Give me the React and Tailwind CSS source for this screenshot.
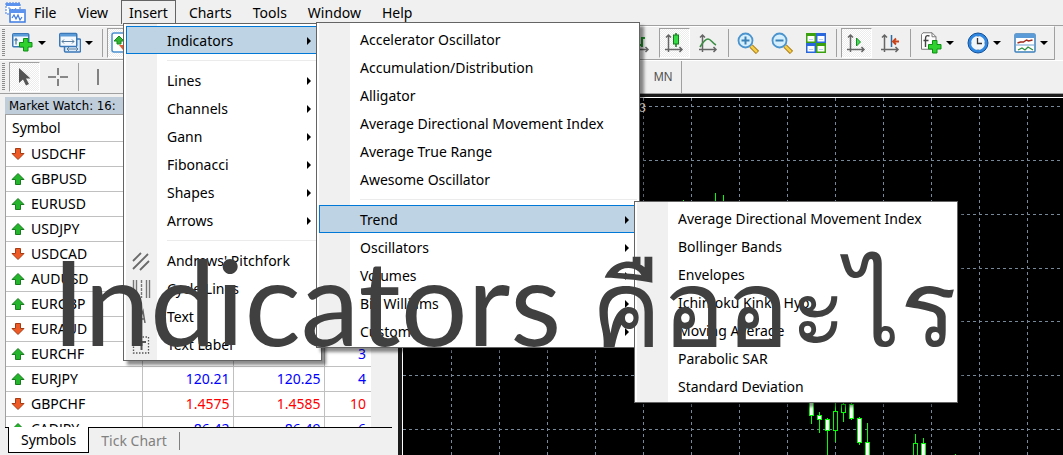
const ICON = { width: 22, height: 22, viewBox: '0 0 22 22', fill: 'none' };

function LogoIcon() {
  return (
    <svg width="21" height="21" viewBox="0 0 21 21" fill="none" aria-hidden="true">
      <rect x="1" y="1" width="14" height="11" fill="#fff" stroke="#3f7be0" strokeDasharray="2 1" />
      <rect x="1" y="1" width="14" height="3" fill="#5b93ee" />
      <path d="M3 6h2v3M7 7l2 2 2-3" stroke="#5b93ee" />
      <rect x="5" y="8" width="15" height="12" fill="#fff" stroke="#3f7be0" strokeWidth="1.5" />
      <rect x="5" y="8" width="15" height="3" fill="#5b93ee" />
      <path d="M7 16l2-3 2 4 2-4 2 5 2-3" stroke="#3f7be0" strokeWidth="1.2" />
    </svg>
  );
}

function Plus({ x, y }) {
  return (
    <path
      transform={`translate(${x} ${y})`}
      d="M4.500 .5h4.500v4h4v4.500h-4v4h-4.500v-4h-4v-4.500h4z"
      fill="#2fd12f"
      stroke="#0c8f12"
    />
  );
}

function NewChartIcon() {
  return (
    <svg {...ICON} aria-hidden="true">
      <rect x=".75" y="1.750" width="16" height="13" rx="1" fill="#f4f9ff" stroke="#3a78b8" strokeWidth="1.500" />
      <rect x="1" y="2" width="15" height="2.500" fill="#5b9bd8" />
      <path d="M4 6.500v6M2.500 8.500L4 6.500l1.500 2M7 12h4" stroke="#47779f" strokeWidth="1.200" />
      <Plus x={7} y={6} />
    </svg>
  );
}

function ProfilesIcon() {
  return (
    <svg {...ICON} aria-hidden="true">
      <rect x="5.500" y="7" width="16" height="13" rx="1" fill="#dcebf9" stroke="#3a78b8" strokeWidth="1.500" />
      <path d="M8 17h11M10 15l-2 2 2 2M17 15l2 2-2 2" stroke="#5b7f9f" />
      <rect x=".75" y="1.500" width="17" height="13" rx="1" fill="#f4f9ff" stroke="#3a78b8" strokeWidth="1.500" />
      <rect x="1" y="2" width="16" height="2.500" fill="#5b9bd8" />
      <path d="M3 9.500h12M5 7.500l-2 2 2 2M13 7.500l2 2-2 2" stroke="#5b7f9f" />
    </svg>
  );
}

function WatchIcon() {
  return (
    <svg {...ICON} aria-hidden="true">
      <rect x="1" y="1" width="20" height="19" rx="2" fill="#fff" stroke="#4a90d0" strokeWidth="1.500" />
      <path d="M8 4l5 5h-3v3H6V9H3z" fill="#33b533" stroke="#168a1c" />
      <path d="M8 13l4 5 4-5z" fill="#f0592a" />
    </svg>
  );
}

function Axes() {
  return (
    <path
      d="M5.500 3v17M3 5.500L5.500 3 8 5.500M2 17.500h17M16.500 15l2.500 2.500-2.500 2.500"
      stroke="#666"
      strokeWidth="1.500"
    />
  );
}

function BarChartIcon() {
  return (
    <svg {...ICON} aria-hidden="true">
      <Axes />
      <path d="M13 5v10M10 13h3M13 6h3" stroke="#1f9a2a" strokeWidth="2" />
    </svg>
  );
}

function CandleIcon() {
  return (
    <svg {...ICON} aria-hidden="true">
      <Axes />
      <path d="M13 1v14" stroke="#157a1c" strokeWidth="1.500" />
      <rect x="10.500" y="3" width="5" height="9" fill="#35dc46" stroke="#157a1c" />
    </svg>
  );
}

function LineChartIcon() {
  return (
    <svg {...ICON} aria-hidden="true">
      <Axes />
      <path d="M3 15C6 10 9 7 11 7c3 0 4 4 8 6" stroke="#3c8f45" strokeWidth="1.600" />
    </svg>
  );
}

function ZoomIcon({ plus }) {
  return (
    <svg {...ICON} aria-hidden="true">
      <path d="M14 14l6.500 6.500" stroke="#a8780f" strokeWidth="4.500" />
      <path d="M14 14l6 6" stroke="#f5cf4a" strokeWidth="2.500" />
      <circle cx="8.500" cy="8.500" r="7" fill="#d6efff" stroke="#4b94cd" strokeWidth="1.800" />
      <path d={plus ? 'M4.500 8.500h8M8.500 4.500v8' : 'M4.500 8.500h8'} stroke="#3a80b5" strokeWidth="2" />
    </svg>
  );
}

function TilesIcon() {
  return (
    <svg {...ICON} aria-hidden="true">
      <rect x="1" y="1" width="10" height="10" fill="#3ba10f" />
      <rect x="11" y="1" width="10" height="10" fill="#2a67dd" />
      <rect x="1" y="11" width="10" height="10" fill="#2a67dd" />
      <rect x="11" y="11" width="10" height="10" fill="#3ba10f" />
      <path d="M2.500 4h7v5.500h-7zM12.500 4h7v5.500h-7zM2.500 14h7v5.500h-7zM12.500 14h7v5.500h-7z" fill="#fff" />
      <path d="M4 7.500h4M14 7.500h4M4 17.500h4M14 17.500h4" stroke="#b8d2ee" />
    </svg>
  );
}

function AutoScrollIcon() {
  return (
    <svg {...ICON} aria-hidden="true">
      <Axes />
      <path d="M11.500 6v8l4-4z" fill="#45dc58" stroke="#1b8a26" />
    </svg>
  );
}

function ShiftIcon() {
  return (
    <svg {...ICON} aria-hidden="true">
      <Axes />
      <path d="M12.500 3v12" stroke="#2c6aa0" strokeWidth="1.500" />
      <path d="M14 9.500h6M17 6.500l-3 3 3 3" stroke="#c9431a" strokeWidth="1.800" />
    </svg>
  );
}

function IndicatorIcon() {
  return (
    <svg {...ICON} aria-hidden="true">
      <path d="M3 .75h9l4 4v12.500H1.500V2.500z" fill="#fdfdfd" stroke="#777" />
      <path d="M12 .75v4h4" stroke="#777" />
      <path d="M9.500 4c-3-1-4 0-4 3v8M3.500 8.500h5" stroke="#444" strokeWidth="1.400" />
      <Plus x={8} y={8} />
    </svg>
  );
}

function ClockIcon() {
  return (
    <svg {...ICON} aria-hidden="true">
      <circle cx="11" cy="11" r="8.500" fill="#f1f6fb" stroke="#2f87e0" strokeWidth="3" />
      <circle cx="11" cy="11" r="10" stroke="#10509c" />
      <path d="M10.500 6v5.500H15" stroke="#333" strokeWidth="1.300" />
      <path d="M11 4v1M11 17v1M4 11h1M17 11h1" stroke="#888" />
    </svg>
  );
}

function TemplateIcon() {
  return (
    <svg {...ICON} aria-hidden="true">
      <rect x="1" y="2" width="20" height="18" rx="1" fill="#fff" stroke="#3e80bd" strokeWidth="1.500" />
      <rect x="1" y="2" width="20" height="4" fill="#5b9bd8" />
      <path d="M1 13h20" stroke="#6ea3d0" />
      <path d="M3.500 11l3-1 3 0 3-2 2 1 4-1" stroke="#a02b1c" strokeWidth="1.500" />
      <path d="M4 18l4-2 3 2 3-3 5 3" stroke="#2f9140" strokeWidth="1.300" />
    </svg>
  );
}

function CursorIcon() {
  return (
    <svg {...ICON} aria-hidden="true">
      <path d="M6 2v15l4-3.500 3 6 3-1.500-3-5.500h4.500z" fill="#555" />
    </svg>
  );
}

function CrosshairIcon() {
  return (
    <svg {...ICON} aria-hidden="true">
      <path d="M11 2v7M11 13v7M1 11h8M13 11h8" stroke="#666" strokeWidth="1.600" />
    </svg>
  );
}

function VLineIcon() {
  return (
    <svg {...ICON} aria-hidden="true">
      <path d="M11 3v16" stroke="#666" strokeWidth="1.600" />
    </svg>
  );
}

function PitchforkIcon() {
  return (
    <svg {...ICON} aria-hidden="true">
      <path d="M2 11l8-8M2 19L17 4M9 20l9-9" stroke="#6a6a6a" strokeWidth="1.800" />
    </svg>
  );
}

function CycleIcon() {
  return (
    <svg {...ICON} aria-hidden="true">
      <path d="M2.500 2v18M5.500 2v18M15.500 2v18M18.500 2v18" stroke="#777" strokeWidth="1.400" />
      <path d="M10.500 2v18" stroke="#777" strokeWidth="1.400" strokeDasharray="3 1" />
    </svg>
  );
}

function TextIcon() {
  return (
    <svg {...ICON} aria-hidden="true">
      <path d="M7 17l5-12 2 12M9 13h5" stroke="#666" strokeWidth="1.500" />
    </svg>
  );
}

function LabelIcon() {
  return (
    <svg {...ICON} aria-hidden="true">
      <rect x="2.500" y="3" width="15" height="16" stroke="#555" strokeWidth="1.300" strokeDasharray="1.500 1.500" />
      <path d="M6 8h9M10.500 8v8" stroke="#555" strokeWidth="2" />
      <rect x="1" y="1" width="4" height="4" fill="#555" />
    </svg>
  );
}

function PriceArrow({ up }) {
  return (
    <svg className="shrink-0" width="14" height="14" viewBox="0 0 14 14" aria-hidden="true">
      {up ? (
        <path d="M7 1.500l6 6h-3.500v5h-5v-5H1z" fill="#25b52c" stroke="#177a1c" />
      ) : (
        <path d="M7 12.500l6-6H9.500v-5h-5v5H1z" fill="#ee5a26" stroke="#a83a12" />
      )}
    </svg>
  );
}

function Grip() {
  return (
    <span className="ml-[2px] h-[28px] w-[3px] shrink-0 bg-[repeating-linear-gradient(#8c8c8c_0_1px,#f0f0f0_1px_2px)]" />
  );
}

function Separator() {
  return (
    <span className="flex h-[28px] w-[6px] shrink-0 justify-center">
      <span className="w-px bg-[#a0a0a0]" />
    </span>
  );
}

function ToolButton({ label, pressed, children }) {
  return (
    <button
      type="button"
      aria-label={label}
      aria-pressed={pressed}
      className="group flex h-[30px] w-[34px] shrink-0 items-center justify-center"
    >
      <span className="flex h-[30px] w-[31px] items-center justify-center border border-transparent group-aria-pressed:border-t-[#a0a0a0] group-aria-pressed:border-r-white group-aria-pressed:border-b-white group-aria-pressed:border-l-[#a0a0a0] group-aria-pressed:bg-[repeating-conic-gradient(#ffffff_0_25%,#ececec_0_50%)] group-aria-pressed:bg-[length:2px_2px]">
        {children}
      </span>
    </button>
  );
}

function DropButton({ label, children }) {
  return (
    <button
      type="button"
      aria-label={label}
      aria-haspopup="menu"
      className="flex h-[30px] w-[47px] shrink-0 items-center gap-1 pl-[7px]"
    >
      {children}
      <svg width="8" height="4" viewBox="0 0 8 4" aria-hidden="true">
        <path d="M0 0h8L4 4z" fill="#000" />
      </svg>
    </button>
  );
}

function Menu({ className, items, label }) {
  return (
    <ul
      role="menu"
      aria-label={label}
      className={`absolute border border-[#646464] bg-[linear-gradient(to_right,#ffffff_2px,#f0f0f0_2px,#f0f0f0_33px,#ffffff_33px)] p-[2px] shadow-[4px_4px_3px_rgba(0,0,0,0.45)] ${className}`}
    >
      {items.map((item, i) =>
        item === null ? (
          <li key={i} role="separator" className="flex h-3 items-center pl-[41px]">
            <span className="h-px w-full bg-[#ebebeb]" />
          </li>
        ) : (
          <li key={item.name} role="none">
            <button
              type="button"
              role="menuitem"
              className={`flex h-7 w-full items-center border pt-[2px] pr-[7px] text-left whitespace-nowrap ${
                item.active ? 'border-[#0078d7] bg-[#bed3e4]' : 'border-transparent'
              }`}
            >
              <span className="flex w-10 shrink-0 pl-[4px]">{item.icon}</span>
              <span className="grow">{item.name}</span>
              {item.sub && (
                <svg width="4" height="8" viewBox="0 0 4 8" aria-hidden="true">
                  <path d="M0 0v8l4-4z" fill="#000" />
                </svg>
              )}
            </button>
          </li>
        ),
      )}
    </ul>
  );
}

const insertMenu = [
  { name: 'Indicators', sub: true, active: true },
  null,
  { name: 'Lines', sub: true },
  { name: 'Channels', sub: true },
  { name: 'Gann', sub: true },
  { name: 'Fibonacci', sub: true },
  { name: 'Shapes', sub: true },
  { name: 'Arrows', sub: true },
  null,
  { name: "Andrews' Pitchfork", icon: <PitchforkIcon /> },
  { name: 'Cycle Lines', icon: <CycleIcon /> },
  { name: 'Text', icon: <TextIcon /> },
  { name: 'Text Label', icon: <LabelIcon /> },
];

const indicatorMenu = [
  { name: 'Accelerator Oscillator' },
  { name: 'Accumulation/Distribution' },
  { name: 'Alligator' },
  { name: 'Average Directional Movement Index' },
  { name: 'Average True Range' },
  { name: 'Awesome Oscillator' },
  null,
  { name: 'Trend', sub: true, active: true },
  { name: 'Oscillators', sub: true },
  { name: 'Volumes', sub: true },
  { name: 'Bill Williams', sub: true },
  { name: 'Custom', sub: true },
];

const trendMenu = [
  { name: 'Average Directional Movement Index' },
  { name: 'Bollinger Bands' },
  { name: 'Envelopes' },
  { name: 'Ichimoku Kinko Hyo' },
  { name: 'Moving Average' },
  { name: 'Parabolic SAR' },
  { name: 'Standard Deviation' },
];

const quotes = [
  { symbol: 'USDCHF', up: false },
  { symbol: 'GBPUSD', up: true },
  { symbol: 'EURUSD', up: true },
  { symbol: 'USDJPY', up: true },
  { symbol: 'USDCAD', up: false },
  { symbol: 'AUDUSD', up: true },
  { symbol: 'EURGBP', up: true },
  { symbol: 'EURAUD', up: false },
  { symbol: 'EURCHF', up: true, spread: '3' },
  { symbol: 'EURJPY', up: true, bid: '120.21', ask: '120.25', spread: '4' },
  { symbol: 'GBPCHF', up: false, bid: '1.4575', ask: '1.4585', spread: '10' },
  { symbol: 'CADJPY', up: true, bid: '86.42', ask: '86.49', spread: '6' },
];

const gridX = Array.from({ length: 40 }, (_, i) => 48.5 + i * 48);
const gridY = [8.5, 62.5, 116.5, 170.5, 223.5, 277.5, 331.5, 385.5, 439.5, 493.5];

// [x, wick top, wick bottom, body top, body bottom, filled]
const candles = [
  [280, 102, 110, 106, 110, false],
  [312, 95, 120, 112, 120, false],
  [320, 97, 120, 112, 120, true],
  [408, 290, 326, 300, 317, true],
  [416, 314, 335, 317, 321, true],
  [424, 320, 400, 321, 332, true],
  [432, 305, 344, 313, 332, false],
  [440, 305, 324, 306, 314, false],
  [448, 305, 322, 306, 320, true],
  [456, 319, 347, 320, 344, true],
  [464, 325, 400, 344, 400, true],
  [512, 336, 400, 345, 400, false],
  [520, 340, 400, 345, 400, true],
  [552, 356, 400, 370, 400, false],
];

function Chart() {
  return (
    <svg className="h-full w-full" shapeRendering="crispEdges" role="img" aria-label="Price chart">
      <g stroke="#778899" strokeDasharray="3 3">
        {gridX.map((x) => (
          <line key={x} x1={x} x2={x} y1="0" y2="2000" />
        ))}
        {gridY.map((y) => (
          <line key={y} x1="0" x2="4000" y1={y} y2={y} />
        ))}
      </g>
      {candles.map(([x, top, bottom, bodyTop, bodyBottom, filled]) => (
        <g key={x} stroke="#00ff00">
          <line x1={x + 0.5} x2={x + 0.5} y1={top} y2={bottom} />
          <rect
            x={x - 1.5}
            y={bodyTop + 0.5}
            width="4"
            height={bodyBottom - bodyTop}
            fill={filled ? '#ffffff' : '#000000'}
          />
        </g>
      ))}
      <text x="236" y="14" fill="#ffffff" className="font-['Liberation_Sans'] text-[12px]">
        3
      </text>
    </svg>
  );
}

export default function App() {
  return (
    <div className="relative flex h-screen flex-col overflow-hidden bg-[#f0f0f0] font-['Noto_Sans','Open_Sans',sans-serif] text-[14px] leading-5 text-black">
      <nav className="flex h-[26px] shrink-0 items-start border-b border-[#a0a0a0] pl-[5px]">
        <span className="mt-[2px]">
          <LogoIcon />
        </span>
        <div className="flex gap-[5px]">
          {['File', 'View', 'Insert', 'Charts', 'Tools', 'Window', 'Help'].map((name) => (
            <button
              key={name}
              type="button"
              aria-expanded={name === 'Insert'}
              className="h-6 border border-b-0 border-transparent px-[7px] aria-expanded:border-[#646464]"
            >
              {name}
            </button>
          ))}
        </div>
      </nav>

      <div className="mr-2 flex h-[34px] shrink-0 items-center border-t border-r border-b border-t-white border-r-[#a0a0a0] border-b-[#a0a0a0]">
        <Grip />
        <DropButton label="New chart">
          <NewChartIcon />
        </DropButton>
        <DropButton label="Profiles">
          <ProfilesIcon />
        </DropButton>
        <Separator />
        <ToolButton label="Market watch" pressed>
          <WatchIcon />
        </ToolButton>
        <div className="ml-auto flex items-center">
          <ToolButton label="Bar chart">
            <BarChartIcon />
          </ToolButton>
          <ToolButton label="Candlesticks" pressed>
            <CandleIcon />
          </ToolButton>
          <ToolButton label="Line chart">
            <LineChartIcon />
          </ToolButton>
          <Separator />
          <ToolButton label="Zoom in">
            <ZoomIcon plus />
          </ToolButton>
          <ToolButton label="Zoom out">
            <ZoomIcon />
          </ToolButton>
          <ToolButton label="Tile windows">
            <TilesIcon />
          </ToolButton>
          <Separator />
          <ToolButton label="Auto scroll" pressed>
            <AutoScrollIcon />
          </ToolButton>
          <ToolButton label="Chart shift">
            <ShiftIcon />
          </ToolButton>
          <Separator />
          <DropButton label="Indicator list">
            <IndicatorIcon />
          </DropButton>
          <DropButton label="Periods">
            <ClockIcon />
          </DropButton>
          <DropButton label="Templates">
            <TemplateIcon />
          </DropButton>
        </div>
      </div>

      <div className="flex h-[34px] shrink-0 items-center border-t border-b border-t-white border-b-[#a0a0a0]">
        <div className="flex w-[645px] shrink-0 items-center">
          <Grip />
          <span className="w-[2px]" />
          <ToolButton label="Cursor" pressed>
            <CursorIcon />
          </ToolButton>
          <ToolButton label="Crosshair">
            <CrosshairIcon />
          </ToolButton>
          <Separator />
          <ToolButton label="Vertical line">
            <VLineIcon />
          </ToolButton>
        </div>
        <button
          type="button"
          className="h-full w-[37px] border-r border-[#a0a0a0] font-['Liberation_Sans',sans-serif] text-[12px] text-[#505050]"
        >
          MN
        </button>
      </div>

      <div className="flex min-h-0 grow">
        <aside className="flex w-[398px] shrink-0 flex-col pt-[3px] pr-[6px] pl-[5px]">
          <h2 className="h-[17px] shrink-0 bg-[#bfcddb] pl-1 font-['DejaVu_Sans_Condensed','Noto_Sans',sans-serif] text-[13px] leading-[17px]">
            Market Watch: 16:
          </h2>
          <div className="min-h-0 grow overflow-hidden border-t border-l border-[#a0a0a0] pr-[21px]">
            <table className="w-full table-fixed border-collapse bg-white">
              <colgroup>
                <col />
                <col className="w-[91px]" />
                <col className="w-[91px]" />
                <col className="w-[47px]" />
              </colgroup>
              <thead>
                <tr className="h-[26px] border-b border-[#c0c0c0] text-left">
                  <th className="pl-[6px] font-normal">Symbol</th>
                  <th />
                  <th />
                  <th />
                </tr>
              </thead>
              <tbody>
                {quotes.map((q) => (
                  <tr
                    key={q.symbol}
                    className={`h-[25px] border-b border-[#c0c0c0] text-right ${
                      q.symbol === 'GBPCHF' ? 'text-[#ff0000]' : 'text-[#0000ff]'
                    }`}
                  >
                    <td className="border-r border-[#c0c0c0] text-black">
                      <span className="flex items-center gap-[6px] pl-[5px]">
                        <PriceArrow up={q.up} />
                        {q.symbol}
                      </span>
                    </td>
                    <td className="border-r border-[#c0c0c0] pr-[3px]">{q.bid}</td>
                    <td className="border-r border-[#c0c0c0] pr-[3px]">{q.ask}</td>
                    <td className="pr-[5px]">{q.spread}</td>
                  </tr>
                ))}
              </tbody>
            </table>
          </div>
          <div className="flex h-[28px] shrink-0 items-start border-t border-black pl-[3px]">
            <button type="button" className="-mt-px h-[26px] border border-t-0 border-black bg-white px-3">
              Symbols
            </button>
            <button
              type="button"
              className="mt-1 h-[18px] border-r border-[#808080] px-3 leading-[18px] text-[#808080]"
            >
              Tick Chart
            </button>
          </div>
        </aside>
        <main className="min-w-0 grow overflow-hidden border-t-[3px] border-l-[4px] border-t-[#1a1a1a] border-l-[#1a1a1a] bg-black">
          <div className="h-full border-t border-l border-white">
            <Chart />
          </div>
        </main>
      </div>

      <Menu label="Insert" className="top-[23px] left-[123px] w-[199px]" items={insertMenu} />
      <Menu label="Indicators" className="top-[22px] left-[316px] w-[324px]" items={indicatorMenu} />
      <Menu label="Trend" className="top-[201px] left-[634px] w-[324px]" items={trendMenu} />

      <h1 className="pointer-events-none absolute top-[231px] left-[52px] font-['Lato',sans-serif] text-[118px] leading-[140px] whitespace-nowrap text-[#404040]">
        Indicators <span className="text-[106px]">คืออะไร</span>
      </h1>
    </div>
  );
}
